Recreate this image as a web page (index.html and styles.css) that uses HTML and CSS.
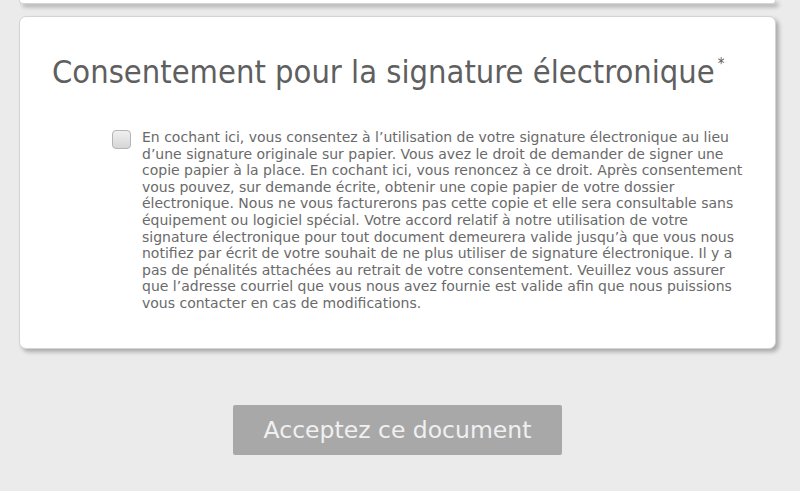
FILE: index.html
```html
<!DOCTYPE html>
<html lang="fr">
<head>
    <meta charset="UTF-8">
    <meta name="viewport" content="width=device-width, initial-scale=1.0">
    <title>Consentement</title>
    <link rel="stylesheet" href="styles.css">
</head>
<body>
    <main class="page">
        <div class="card prev"></div>

        <section class="card consent">
            <h1>Consentement pour la signature électronique<sup>*</sup></h1>
            <label class="agree">
                <input type="checkbox">
                <span class="box"></span>
                <span class="terms">En cochant ici, vous consentez à l’utilisation de votre signature électronique au lieu d’une signature originale sur papier. Vous avez le droit de demander de signer une copie papier à la place. En cochant ici, vous renoncez à ce droit. Après consentement vous pouvez, sur demande écrite, obtenir une copie papier de votre dossier électronique. Nous ne vous facturerons pas cette copie et elle sera consultable sans équipement ou logiciel spécial. Votre accord relatif à notre utilisation de votre signature électronique pour tout document demeurera valide jusqu’à que vous nous notifiez par écrit de votre souhait de ne plus utiliser de signature électronique. Il y a pas de pénalités attachées au retrait de votre consentement. Veuillez vous assurer que l’adresse courriel que vous nous avez fournie est valide afin que nous puissions vous contacter en cas de modifications.</span>
            </label>
        </section>

        <div class="actions">
            <button class="accept" disabled>Acceptez ce document</button>
        </div>
    </main>
</body>
</html>
```

FILE: styles.css
```css
* {
    box-sizing: border-box;
}

body {
    margin: 0;
    background-color: #ebebeb;
    font-family: "DejaVu Sans", Verdana, sans-serif;
}

.page {
    width: 757px;
    margin-left: 19px;
}

.card {
    background-color: #fff;
    border: 1px solid #d4d4d4;
    border-radius: 7px;
    box-shadow: 3px 3px 4px rgba(0, 0, 0, 0.28);
}

.prev {
    height: 4px;
    border-top: none;
    border-radius: 0 0 7px 7px;
}

.consent {
    margin-top: 12px;
    padding: 35px 30px 36px 32px;
}

.consent h1 {
    margin: 0 0 37px;
    font-family: "DejaVu Sans Condensed", "DejaVu Sans", sans-serif;
    font-weight: normal;
    font-size: 32.4px;
    line-height: 40px;
    color: #5f5f5f;
}

.consent h1 sup {
    font-size: 15px;
    vertical-align: top;
    position: relative;
    top: -8px;
    left: 3px;
}

.agree {
    display: flex;
    gap: 11px;
    padding-left: 60px;
}

.agree input {
    display: none;
}

.box {
    flex: none;
    width: 19px;
    height: 19px;
    margin-top: 1px;
    border: 1px solid #b5b5b5;
    border-radius: 4px;
    background: linear-gradient(#f0f0f0, #d6d6d6);
}

.terms {
    font-size: 14px;
    line-height: 16.6px;
    color: #6a6a6a;
}

.actions {
    display: flex;
    justify-content: center;
    margin-top: 56px;
}

.accept {
    width: 329px;
    height: 50px;
    border: none;
    border-radius: 2px;
    background-color: #a8a8a8;
    color: #f0f0f0;
    font-family: "DejaVu Sans", Verdana, sans-serif;
    font-size: 23.5px;
}
```
